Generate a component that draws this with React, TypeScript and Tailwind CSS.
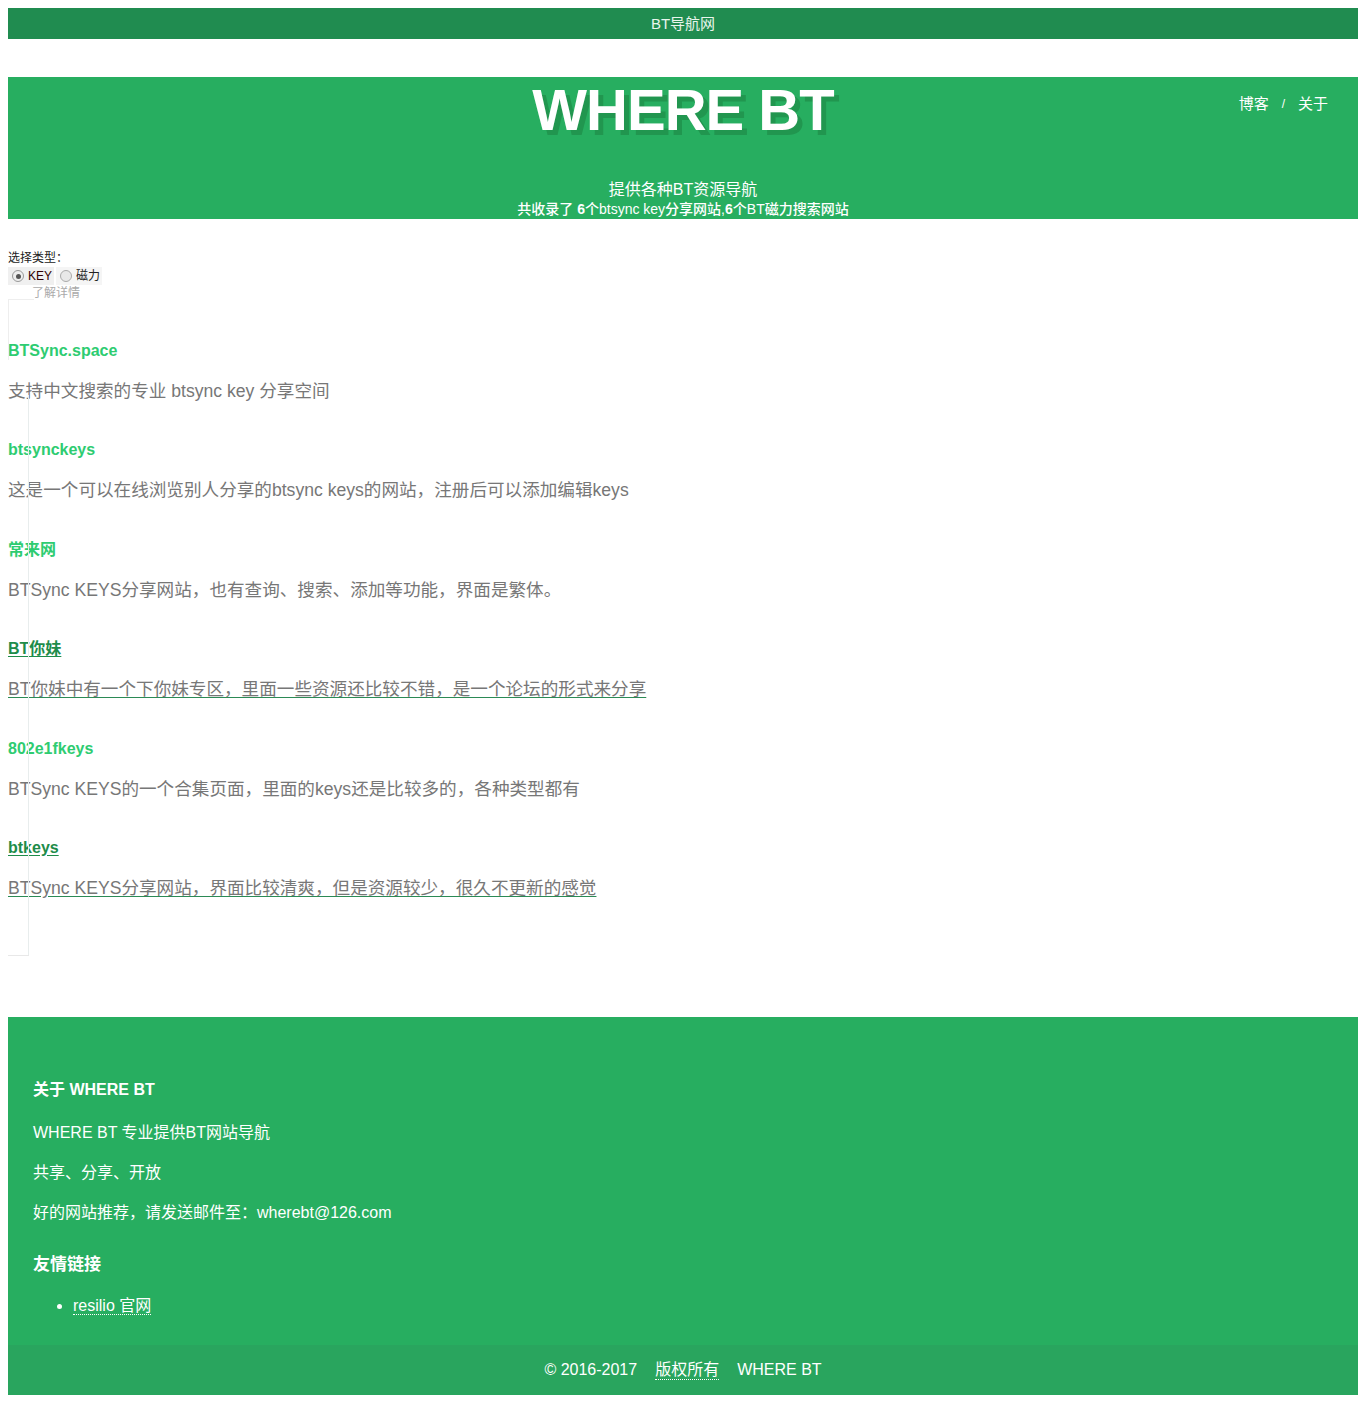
import React from 'react';

type Site = {
  name: string;
  desc: string;
  visited?: boolean;
};

const sites: Site[] = [
  { name: 'BTSync.space', desc: '支持中文搜索的专业 btsync key 分享空间' },
  { name: 'btsynckeys', desc: '这是一个可以在线浏览别人分享的btsync keys的网站，注册后可以添加编辑keys' },
  { name: '常来网', desc: 'BTSync KEYS分享网站，也有查询、搜索、添加等功能，界面是繁体。' },
  { name: 'BT你妹', desc: 'BT你妹中有一个下你妹专区，里面一些资源还比较不错，是一个论坛的形式来分享', visited: true },
  { name: '802e1fkeys', desc: 'BTSync KEYS的一个合集页面，里面的keys还是比较多的，各种类型都有' },
  { name: 'btkeys', desc: 'BTSync KEYS分享网站，界面比较清爽，但是资源较少，很久不更新的感觉', visited: true },
];

const font = "font-['Liberation_Sans','Noto_Sans_CJK_SC',sans-serif]";

export default function App() {
  return (
    <div className={`${font} bg-white p-2`}>
      {/* 顶部条 */}
      <div className="h-[31px] bg-[#208c50] flex items-center justify-center pt-[2px] text-[15px] text-[#e8f5ec]">
        BT导航网
      </div>

      {/* 头部 */}
      <header className="relative mt-[38px] h-[142px] bg-[#27ae60] text-white">
        <h1 className="pt-[2px] text-center text-[58px] leading-[62px] font-bold tracking-[-1px] [text-shadow:5px_5px_0_#21964f]">
          WHERE BT
        </h1>
        <nav className="absolute right-[30px] top-[16px] flex items-center gap-[13px] text-[15px]">
          <a href="#">博客</a>
          <span className="text-[12px]">/</span>
          <a href="#">关于</a>
        </nav>
        <p className="mt-[39px] text-center text-[16px] leading-[20px]">提供各种BT资源导航</p>
        <p className="text-center text-[14px] leading-[18px] font-medium">
          共收录了 <b>6</b>个btsync key分享网站,<b>6</b>个BT磁力搜索网站
        </p>
      </header>

      {/* 主体 */}
      <main className="relative pt-[31px] pb-[80px]">
        <div className="text-[12px] leading-[17px] text-[#222]">选择类型：</div>
        <div className="flex items-center gap-[2px] text-[12px] leading-[18px] h-[18px]">
          <label className="flex items-center bg-[#f0f0f0] pl-[4px] pr-[2px] h-[18px]">
            <span className="mr-[4px] w-[12px] h-[12px] rounded-full border border-[#999] bg-[#eee] flex items-center justify-center">
              <span className="w-[5px] h-[5px] rounded-full bg-[#555]" />
            </span>
            <span className="text-[#300]">KEY</span>
          </label>
          <label className="flex items-center bg-[#f5f5f5] pl-[4px] pr-[2px] h-[18px]">
            <span className="mr-[4px] w-[12px] h-[12px] rounded-full border border-[#aaa] bg-[#e8e8e8]" />
            <span className="text-[#222]">磁力</span>
          </label>
        </div>
        <div className="pl-[24px] text-[12px] leading-[16px] text-[#aaa]">了解详情</div>

        {/* 列表外框残影 */}
        <div className="absolute left-0 top-[80px] w-[26px] h-[61px] border-l border-t border-[#eee]" />
        <div className="absolute left-[20px] top-[176px] w-px h-[560px] bg-[#e8eded]" />
        <div className="absolute left-0 top-[736px] w-[21px] h-px bg-[#e8e8e8]" />

        <ul className="mt-[40px]">
          {sites.map((s) => (
            <li key={s.name} className="h-[99.4px]">
              <a
                href="#"
                className={`block text-[16px] leading-[20px] font-bold ${
                  s.visited ? 'text-[#1e8c4a] underline underline-offset-2' : 'text-[#2ecc71]'
                }`}
              >
                {s.name}
              </a>
              <p
                className={`mt-[19px] text-[17.6px] leading-[22px] text-[#777] ${
                  s.visited ? 'underline underline-offset-2 decoration-[#2b8a55]' : ''
                }`}
              >
                {s.desc}
              </p>
            </li>
          ))}
        </ul>
      </main>

      {/* 页脚 */}
      <footer className="bg-[#27ae60] text-white">
        <div className="px-[25px] pt-[62px] pb-[28px]">
          <h3 className="text-[16px] leading-[22px] font-bold">关于 WHERE BT</h3>
          <p className="mt-[21px] text-[16px] leading-[22px]">WHERE BT 专业提供BT网站导航</p>
          <p className="mt-[18px] text-[16px] leading-[22px]">共享、分享、开放</p>
          <p className="mt-[18px] text-[16px] leading-[22px]">好的网站推荐，请发送邮件至：wherebt@126.com</p>
          <h3 className="mt-[30px] text-[17px] leading-[22px] font-bold">友情链接</h3>
          <ul className="mt-[19px] pl-[40px] list-disc text-[16px] leading-[22px]">
            <li>
              <a href="#" className="border-b border-dotted border-white">resilio 官网</a>
            </li>
          </ul>
        </div>
        <div className="h-[50px] bg-[#29a55e] flex items-center justify-center gap-[18px] text-[16px]">
          <span>© 2016-2017</span>
          <a href="#" className="border-b border-dotted border-white leading-[18px]">版权所有</a>
          <span>WHERE BT</span>
        </div>
      </footer>
    </div>
  );
}
